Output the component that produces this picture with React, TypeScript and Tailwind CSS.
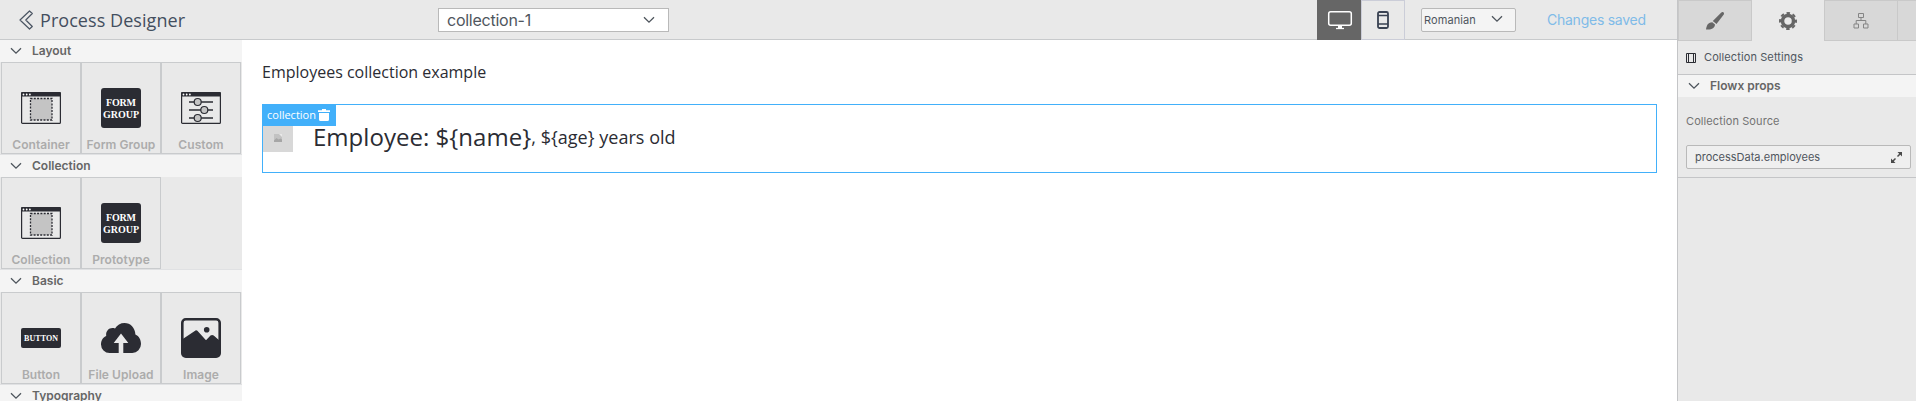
import React from "react";

const DARK = "#2b2c33";

function Chevron({ className = "" }: { className?: string }) {
  return (
    <svg width="12" height="8" viewBox="0 0 12 8" fill="none" stroke="#4d545c" strokeWidth="1.3" className={className}>
      <path d="M1 1.2 6 6.2 11 1.2" />
    </svg>
  );
}

function WindowFrame() {
  return (
    <>
      <rect x="0.6" y="4.6" width="38.8" height="30.8" rx="1" fill="#e9e9e9" stroke={DARK} strokeWidth="1.2" />
      <path d="M0 5.2A1.2 1.2 0 0 1 1.2 4h37.6A1.2 1.2 0 0 1 40 5.2V8.6H0Z" fill={DARK} />
      <g fill="#fff">
        <circle cx="2.5" cy="6.5" r="0.9" />
        <circle cx="5.7" cy="6.5" r="0.9" />
        <circle cx="8.9" cy="6.5" r="0.9" />
      </g>
    </>
  );
}

function ContainerIcon() {
  return (
    <svg width="40" height="40" viewBox="0 0 40 40">
      <WindowFrame />
      <rect x="9.5" y="10.5" width="21.5" height="21.5" fill="#c4c4c4" stroke={DARK} strokeWidth="1.3" strokeDasharray="2 1.3" />
    </svg>
  );
}

function FormGroupIcon() {
  return (
    <svg width="40" height="40" viewBox="0 0 40 40">
      <rect width="40" height="40" rx="3" fill={DARK} />
      <g fill="#fff" fontFamily="Liberation Serif, serif" fontWeight="700" fontSize="10" textAnchor="middle">
        <text x="20" y="18" textLength="30">FORM</text>
        <text x="20" y="30" textLength="36">GROUP</text>
      </g>
    </svg>
  );
}

function CustomIcon() {
  return (
    <svg width="40" height="40" viewBox="0 0 40 40">
      <WindowFrame />
      <path d="M8 14h24M8 22h24M8 30h24" stroke={DARK} strokeWidth="1.4" />
      <g fill="#c4c4c4" stroke={DARK} strokeWidth="1.2">
        <circle cx="16.7" cy="14" r="3.5" />
        <circle cx="23.3" cy="22" r="3.5" />
        <circle cx="16.7" cy="30" r="3.5" />
      </g>
    </svg>
  );
}

function ButtonIcon() {
  return (
    <svg width="40" height="40" viewBox="0 0 40 40">
      <rect y="10" width="40" height="20" rx="2" fill={DARK} />
      <text x="20" y="22.7" fill="#fff" fontFamily="Liberation Serif, serif" fontWeight="700" fontSize="8" textAnchor="middle" textLength="34">
        BUTTON
      </text>
    </svg>
  );
}

function UploadIcon() {
  return (
    <svg width="40" height="40" viewBox="0 0 40 40">
      <path
        fill={DARK}
        d="M17.700 35H8.600A8.600 8.600 0 0 1 0 26.300C0 22.300 2.300 19 5.200 17.900 4.600 13.500 7.500 10 11.300 10c1 0 1.900.1 2.700.5C16 7 19.500 5 23.500 5c6 0 10.700 4.800 10.900 11.500C38 18.200 40 21.700 40 26A9 9 0 0 1 31.300 35H22.300V25h5L20 15.500 12.700 25h5Z"
      />
    </svg>
  );
}

function ImageIcon() {
  return (
    <svg width="40" height="40" viewBox="0 0 40 40">
      <rect x="1.300" y="1.300" width="37.400" height="37.400" rx="3.500" fill="#e9e9e9" stroke={DARK} strokeWidth="2.600" />
      <path d="M1 21.500 14.500 12.500C15.200 12 15.800 12.200 16.400 12.800L25 22.300 29.500 17.600C30.500 16.700 31.800 16.700 32.700 17.600L39 23V36a3 3 0 0 1-3 3H4a3 3 0 0 1-3-3Z" fill={DARK} />
      <circle cx="25.700" cy="11.700" r="2.800" fill={DARK} />
    </svg>
  );
}

type Item = { label: string; icon: React.ReactNode };

function Section({ title, items }: { title: string; items: Item[] }) {
  return (
    <section className="shrink-0">
      <SectionTitle title={title} />
      <div className="flex h-[93px] border-b border-[#e0e1e3] bg-[#e9e9e9] pl-px">
        {items.map((it) => (
          <div key={it.label} className="flex w-20 flex-col items-center border border-[#c9cbcd] pt-[25px]">
            {it.icon}
            <span className="mt-[9px] text-[12px] leading-4 font-semibold tracking-[0.05px] whitespace-nowrap text-[#acacac]">{it.label}</span>
          </div>
        ))}
      </div>
    </section>
  );
}

function SectionTitle({ title }: { title: string }) {
  return (
    <div className="flex h-[22px] items-center bg-[#f4f4f4] pl-[10px]">
      <Chevron />
      <span className="ml-[10px] text-[12px] leading-4 font-semibold text-[#666]">{title}</span>
    </div>
  );
}

function Tab({ active, first, children }: { active?: boolean; first?: boolean; children: React.ReactNode }) {
  return (
    <div
      className={`flex h-[41px] items-center justify-center border-r border-[#c9c9c9] ${first ? "w-[74px] border-l" : "w-[73px]"} ${active ? "" : "border-y bg-[#d8d8d8]"}`}
    >
      {children}
    </div>
  );
}

export default function App() {
  return (
    <div className="flex h-[401px] w-[1916px] overflow-hidden bg-white font-['Inter',sans-serif]">
      <div className="flex w-[1677px] flex-col">
        <header className="flex h-10 shrink-0 items-center border-b border-[#c8cacc] bg-[#e9e9e9]">
          <svg width="15" height="20" viewBox="0 0 15 20" fill="none" stroke="#4b5563" strokeWidth="1.200" className="ml-[19px]">
            <path d="M1 10 10.500 1 13.300 3.500 6.800 10 13.300 16.500 10.500 19Z" strokeLinejoin="round" />
          </svg>
          <span className="ml-[6px] w-[398px] font-['Open_Sans',sans-serif] text-[18px] leading-6 tracking-[0.06px] text-[#434e5e]">Process Designer</span>
          <div className="flex h-6 w-[231px] items-center justify-between border border-[#b9b9b9] bg-white pr-[13px] pl-2">
            <span className="text-[16px] leading-5 tracking-[-0.25px] text-[#4f565e]">collection-1</span>
            <Chevron />
          </div>
          <div className="ml-auto flex h-10 items-center">
            <div className="flex h-10 w-11 items-center justify-center bg-[#666]">
              <svg width="26" height="20" viewBox="0 0 26 20" fill="none" stroke="#fff" className="ml-[2px]">
                <rect x="1.700" y="1.700" width="22.600" height="13.600" rx="2" strokeWidth="1.500" />
                <path d="M11 15.500h4v2.500h-4z" fill="#fff" stroke="none" />
                <path d="M9 18.500h8" strokeWidth="1.300" />
              </svg>
            </div>
            <div className="flex h-10 w-11 items-center justify-center border border-[#cbcdd8]">
              <svg width="12" height="18" viewBox="0 0 12 18" fill="none" stroke="#394252" strokeWidth="1.800">
                <rect x="1" y="1" width="10" height="16" rx="1.500" />
                <path d="M1 4.500h10M1 13h10" strokeWidth="1.300" />
              </svg>
            </div>
            <div className="ml-4 flex h-6 w-[95px] items-center rounded-[2px] border border-[#b9b9b9] bg-[#f4f4f4] pl-[2px]">
              <span className="w-[67px] text-[11px] leading-4 tracking-[0.1px] text-[#4f565e]">Romanian</span>
              <Chevron className="-mt-px" />
            </div>
            <span className="ml-[31px] w-[130px] text-[14px] leading-5 tracking-[-0.25px] text-[#7fbbe8]">Changes saved</span>
          </div>
        </header>
        <div className="flex min-h-0 flex-1">
          <aside className="flex w-[242px] shrink-0 flex-col overflow-hidden">
            <Section
              title="Layout"
              items={[
                { label: "Container", icon: <ContainerIcon /> },
                { label: "Form Group", icon: <FormGroupIcon /> },
                { label: "Custom", icon: <CustomIcon /> },
              ]}
            />
            <Section
              title="Collection"
              items={[
                { label: "Collection", icon: <ContainerIcon /> },
                { label: "Prototype", icon: <FormGroupIcon /> },
              ]}
            />
            <Section
              title="Basic"
              items={[
                { label: "Button", icon: <ButtonIcon /> },
                { label: "File Upload", icon: <UploadIcon /> },
                { label: "Image", icon: <ImageIcon /> },
              ]}
            />
            <div className="shrink-0">
              <SectionTitle title="Typography" />
            </div>
          </aside>
          <main className="flex-1 px-5 pt-5 font-['Open_Sans',sans-serif] text-[#2b2c33]">
            <p className="text-[16px] leading-6">Employees collection example</p>
            <div className="mt-5 h-[69px] border border-[#42b0fa]">
              <div className="-mt-px -ml-px flex h-[22px] w-[74px] items-center bg-[#42b0fa] pl-[5px] text-[11px] text-white">
                <span className="w-[51px]">collection</span>
                <svg width="12" height="12" viewBox="0 0 12 12" fill="#fff">
                  <path d="M4 0h4v1.300h4V3H0V1.300h4ZM1 4h10v6.500A1.500 1.500 0 0 1 9.500 12h-7A1.500 1.500 0 0 1 1 10.500Z" />
                </svg>
              </div>
              <div className="flex h-[26px] items-center">
                <div className="flex h-[26px] w-[30px] items-center justify-center bg-[#d8d8d8]">
                  <svg width="8" height="8" viewBox="0 0 8 8" className="-mt-[3px]">
                    <rect width="8" height="8" fill="#c2c2c2" />
                    <path d="M0 6.500 2.500 4 4.500 5.500 6.500 4.500 8 5.500V8H0Z" fill="#a6a6a6" />
                    <path d="M5 0h3v3Z" fill="#e8e8e8" />
                  </svg>
                </div>
                <div className="-mt-[5px] ml-5 flex items-center whitespace-nowrap">
                  <span className="text-[24px] leading-8 tracking-[0.03px]">Employee: {"${name}"}</span>
                  <span className="text-[18px] leading-8 tracking-[0.03px]">, {"${age}"} years old</span>
                </div>
              </div>
            </div>
          </main>
        </div>
      </div>
      <aside className="flex w-[239px] flex-col border-l border-[#c4c5c7] bg-[#e9e9e9]">
        <div className="flex h-[41px]">
          <Tab first>
            <svg width="20" height="20" viewBox="0 0 20 20" fill="#666" className="-ml-px">
              <path d="M18.300 1.200c.9.700.9 1.500.3 2.500L11.500 13 7.800 10l8.500-8.500c.7-.6 1.300-.8 2-.3Z" />
              <path d="M7.300 11.200 10 13.600C9.600 17.500 6.500 19 1 18.500 1.500 15 2.500 11.200 7.300 11.200Z" />
            </svg>
          </Tab>
          <Tab active>
            <svg width="18" height="18" viewBox="0 0 18 18" fill="none" stroke="#666">
              <circle cx="9" cy="9" r="5.500" strokeWidth="3.500" />
              <circle cx="9" cy="9" r="8" strokeWidth="2" strokeDasharray="3.500 2.783" strokeDashoffset="1.750" />
            </svg>
          </Tab>
          <Tab>
            <svg width="16" height="16" viewBox="0 0 16 16" fill="none" stroke="#858585">
              <path d="M5.500.5h5v4h-5zM1 11h4.500v4H1zM10.500 11H15v4h-4.500zM8 4.500v3M3.200 11V7.500h9.600V11" />
            </svg>
          </Tab>
          <div className="flex-1 border-y border-[#c9c9c9] bg-[#d8d8d8]" />
        </div>
        <div className="flex h-[34px] items-center border-b border-[#c4c5c7] pl-2">
          <svg width="10" height="10" viewBox="0 0 10 10" fill="none" stroke="#2b2c33">
            <path d="M.5.500h9v9h-9zM2.500.5v9M7.500.5v9" />
          </svg>
          <span className="ml-2 text-[11px] tracking-[0.1px] text-[#4f565e]">Collection Settings</span>
        </div>
        <SectionTitle title="Flowx props" />
        <div className="flex h-[81px] flex-col border-b border-[#c4c5c7] pt-4 pl-2">
          <span className="text-[11px] leading-4 tracking-[0.1px] text-[#737373]">Collection Source</span>
          <div className="mt-4 flex h-6 w-[225px] items-center justify-between rounded-[2px] border border-[#b9b9b9] bg-[#efefef] pr-2 pl-2">
            <span className="text-[11px] text-[#4f565e]">processData.employees</span>
            <svg width="11" height="11" viewBox="0 0 11 11" fill="#4a4a4a">
              <path d="M6.500 0H11v4.500L9.300 2.800 7 5 6 4l2.200-2.300ZM4.500 11H0V6.500l1.700 1.700L4 6l1 1-2.200 2.300Z" />
            </svg>
          </div>
        </div>
      </aside>
    </div>
  );
}
